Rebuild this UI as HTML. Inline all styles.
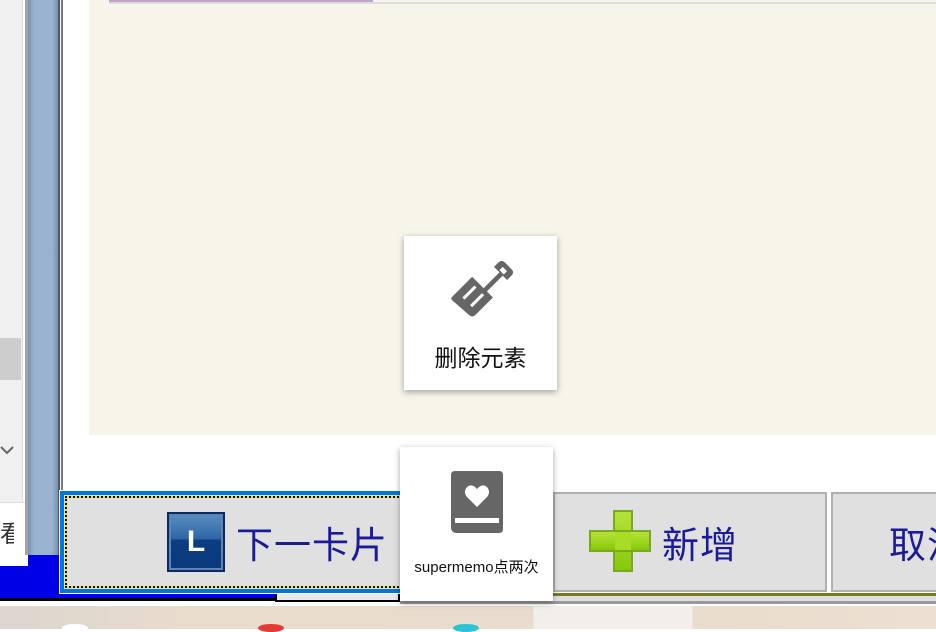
<!DOCTYPE html>
<html><head><meta charset="utf-8"><style>
*{margin:0;padding:0;box-sizing:border-box}
body{width:936px;height:629px;overflow:hidden;position:relative;background:#fff;font-family:"Liberation Sans","Noto Sans CJK SC",sans-serif}
.a{position:absolute}
.card{position:absolute;background:#fff;box-shadow:0 2px 6px rgba(0,0,0,.35);text-align:center}
.btxt{font-family:"Noto Sans CJK SC",sans-serif;color:#1a1a9a;font-size:37px;letter-spacing:1px;white-space:nowrap;line-height:1}
</style></head><body>
<!-- left panel -->
<div class="a" style="left:0;top:0;width:23px;height:502px;background:#f0f0f0;border-right:1px solid #ddd"></div>
<div class="a" style="left:0;top:338px;width:21px;height:42px;background:#cdcdcd"></div>
<svg class="a" style="left:0;top:444px" width="14" height="12" viewBox="0 0 14 12"><path d="M1 3 L7 9 L13 3" stroke="#666" stroke-width="2" fill="none"/></svg>
<div class="a" style="left:0;top:502px;width:27px;height:64px;background:#fff;border-top:1px solid #ddd"></div>
<div class="a" style="left:0;top:520px;font-size:24px;font-family:'Noto Sans CJK SC',sans-serif;color:#333;line-height:1;width:14px;overflow:hidden;white-space:nowrap">看</div>
<!-- scrollbar -->
<div class="a" style="left:25px;top:0;width:3px;height:555px;background:#a0a4aa"></div>
<div class="a" style="left:28px;top:0;width:30px;height:555px;background:linear-gradient(90deg,#7890ae,#99b3d0 20%,#99b3d0 80%,#7890ae)"></div>
<div class="a" style="left:58px;top:0;width:2px;height:555px;background:#505860"></div>
<div class="a" style="left:61px;top:0;width:2px;height:500px;background:#777"></div>
<!-- blue band -->
<div class="a" style="left:0;top:566px;width:28px;height:35px;background:#0000e6"></div>
<div class="a" style="left:28px;top:555px;width:250px;height:46px;background:#0000e6"></div>
<div class="a" style="left:0;top:598px;width:275px;height:3px;background:#000"></div>
<div class="a" style="left:275px;top:590px;width:125px;height:12px;background:#e8e8e8;border:2px solid #000;border-top:none"></div>
<!-- cream content -->
<div class="a" style="left:89px;top:0;width:847px;height:435px;background:#f7f4e9"></div>
<div class="a" style="left:109px;top:0;width:264px;height:2px;background:#c3a3c7"></div>
<div class="a" style="left:109px;top:2px;width:827px;height:2px;background:#ddd"></div>
<!-- lower bars -->
<div class="a" style="left:400px;top:593px;width:536px;height:3px;background:#7a7a20"></div>
<div class="a" style="left:400px;top:596px;width:536px;height:8px;background:#e0e0e0;border-bottom:3px solid #999"></div>
<div class="a" style="left:0;top:606px;width:936px;height:23px;background:linear-gradient(90deg,#ddd6cf,#e8dccd 20%,#e7dccd 57%,#f2efea 57%,#f2efea 74%,#e8dccd 74%,#ede0d2)"></div>
<div class="a" style="left:258px;top:624px;width:26px;height:8px;border-radius:50%;background:#e53935"></div>
<div class="a" style="left:453px;top:624px;width:26px;height:8px;border-radius:50%;background:#2ac4d4"></div>
<div class="a" style="left:62px;top:624px;width:26px;height:8px;border-radius:50%;background:#fff"></div>
<!-- button 1 -->
<div class="a" style="left:59px;top:490px;width:350px;height:104px;background:#fff;padding:1px"><div style="width:100%;height:100%;border:4px solid #0078d7;background:#e0e0e0;padding:1px"><div style="width:100%;height:100%;border:2px dotted #111;background:linear-gradient(#e0e0e0,#e0e0e0) padding-box,#e8e040 border-box"></div></div></div>
<div class="a" style="left:167px;top:512px;width:58px;height:60px;background:linear-gradient(#5a8ec0,#2d66a6 45%,#0b3d80 46%,#0a3a7a);border:2px solid #0a2a60;box-shadow:inset 0 0 0 2px #5c85b5;color:#fff;font:bold 30px 'Liberation Sans',sans-serif;text-align:center;line-height:56px">L</div>
<div class="a btxt" style="left:236px;top:524px">下一卡片</div>
<!-- button 2 -->
<div class="a" style="left:553px;top:492px;width:274px;height:100px;background:#e0e0e0;border:2px solid #b0b0b0"></div>
<div class="a" style="left:613px;top:510px;width:20px;height:62px;background:linear-gradient(#b6e33a,#86c80a);border:2px solid #7aa820"></div>
<div class="a" style="left:589px;top:530px;width:62px;height:22px;background:linear-gradient(#b6e33a,#86c80a);border:2px solid #7aa820"></div>
<div class="a" style="left:615px;top:532px;width:16px;height:18px;background:#a8dc25"></div>
<div class="a btxt" style="left:662px;top:524px">新增</div>
<!-- button 3 -->
<div class="a" style="left:831px;top:492px;width:120px;height:100px;background:#e0e0e0;border:2px solid #b0b0b0;overflow:hidden"><div class="btxt" style="position:absolute;left:56px;top:30px">取消</div></div>
<!-- card 1 -->
<div class="card" style="left:404px;top:236px;width:153px;height:154px">
<svg class="a" style="left:42px;top:20px" width="72" height="72" viewBox="0 0 66 66">
<g fill="#666"><path d="M5 38 L24 19 L43 38 L27 54 Q24 57 21 54 L5 40 Z"/>
<path d="M34 30 L50 14 L53 17 L37 33 Z"/>
<path d="M48 6 Q51 3 54 6 L60 12 Q63 15 60 18 L56 22 L44 10 Z"/></g>
<g fill="#fff"><path d="M15 38 L26 27 L28 29 L17 40 Z"/><path d="M22 45 L33 34 L35 36 L24 47 Z"/>
<path d="M52 10 L56 14 L53 17 L49 13 Z"/></g></svg>
<div class="a" style="left:0;top:103px;width:153px;font-size:23px;font-family:'Noto Sans CJK SC',sans-serif;color:#111;white-space:nowrap">删除元素</div>
</div>
<!-- card 2 -->
<div class="card" style="left:400px;top:447px;width:153px;height:154px">
<svg class="a" style="left:49px;top:24px" width="56" height="64" viewBox="0 0 56 64">
<path fill="#666" d="M6 0 H50 Q54 0 54 4 V58 Q54 62 50 62 H8 Q2 62 2 56 V4 Q2 0 6 0 Z"/>
<rect x="6" y="47" width="44" height="5" fill="#fff"/>
<path fill="#fff" d="M28 36 L18 26 Q14 21 18 16 Q23 12 28 18 Q33 12 38 16 Q42 21 38 26 Z"/></svg>
<div class="a" style="left:0;top:109px;width:153px;font-size:15px;color:#111;white-space:nowrap;font-family:'Liberation Sans','Noto Sans CJK SC',sans-serif">supermemo点两次</div>
</div>
</body></html>
